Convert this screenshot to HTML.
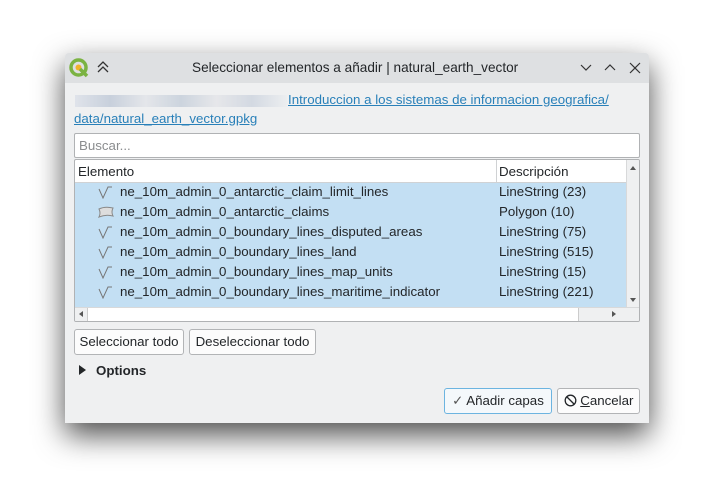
<!DOCTYPE html><html><head><meta charset="utf-8"><style>
body{margin:0;width:714px;height:500px;background:#fff;position:relative;overflow:hidden;font-family:"Liberation Sans","DejaVu Sans",sans-serif;font-size:13.3px;color:#232629}
.win{position:absolute;left:65px;top:53px;width:584px;height:370px;background:#eff0f1;box-shadow:0 12px 30px rgba(0,0,0,.7);border-radius:4px 4px 0 0;overflow:hidden}
.tb{position:absolute;left:0;top:0;width:584px;height:30px;background:#dee0e2;}
.abs{position:absolute;white-space:nowrap}
a{color:#2980b9;text-decoration:underline}
.box{position:absolute;background:#fff;border:1px solid #b0b2b4;border-radius:2px}
.row{position:absolute;left:0;height:20px;line-height:20px;width:551px}
.btn{position:absolute;height:24px;line-height:24px;border:1px solid #b2b4b6;border-radius:3px;background:#fcfcfc;text-align:center}
.ic{position:absolute;left:22px;top:3px}
</style></head><body>
<div class="win">
<div class="tb">
<svg class="abs" style="left:4px;top:5px" width="20" height="20" viewBox="0 0 20 20"><circle cx="9.5" cy="9.5" r="7.5" fill="none" stroke="#7bb342" stroke-width="3.5"/><circle cx="9.5" cy="9.5" r="3" fill="#f0b22a"/><path d="M11 11 L18 18" stroke="#7bb342" stroke-width="3.5"/></svg>
<svg class="abs" style="left:31px;top:7px" width="14" height="14" viewBox="0 0 14 14"><path d="M2 7 L7 2 L12 7 M2 12 L7 7 L12 12" fill="none" stroke="#333" stroke-width="1.3"/></svg>
<div class="abs" style="left:127px;top:7px;font-size:13.6px">Seleccionar elementos a añadir | natural_earth_vector</div>
<svg class="abs" style="left:514px;top:8px" width="66" height="14" viewBox="0 0 66 14"><path d="M2 4 L7 9 L12 4 M26 9 L31 4 L36 9 M51 2 L61 12 M61 2 L51 12" fill="none" stroke="#333" stroke-width="1.2"/></svg>
</div>
<div class="abs" style="left:10px;top:42px;width:212px;height:12px;background:linear-gradient(90deg,#dfe3ea,#c8d0dc,#e4e6ea,#ccd4de,#e6e7ea,#d3d9e2,#eceef0)"></div>
<div class="abs" style="left:223px;top:39px"><a>Introduccion a los sistemas de informacion geografica/</a></div>
<div class="abs" style="left:9px;top:58px"><a>data/natural_earth_vector.gpkg</a></div>
<div class="box" style="left:9px;top:80px;width:564px;height:23px"><span class="abs" style="left:4px;top:4px;color:#8b8d8f">Buscar...</span></div>
<div class="box" style="left:9px;top:106px;width:564px;height:161px;overflow:hidden">
<div class="abs" style="left:0;top:0;width:551px;height:22px;border-bottom:1px solid #d0d2d4"></div>
<div class="abs" style="left:3px;top:4px">Elemento</div>
<div class="abs" style="left:421px;top:0;height:22px;border-left:1px solid #d0d2d4"></div>
<div class="abs" style="left:424px;top:4px">Descripción</div>
<div class="abs" style="left:0;top:23px;width:551px;height:124px;background:#c3dff3"></div>
<div class="row" style="top:22px"><svg class="ic" width="18" height="14"><path d="M2 4 L6 13 L11 2 L15 2" fill="none" stroke="#777"/></svg><span class="abs" style="left:45px">ne_10m_admin_0_antarctic_claim_limit_lines</span><span class="abs" style="left:424px">LineString (23)</span></div>
<div class="row" style="top:42px"><svg class="ic" width="18" height="14"><path d="M2 4 Q8 1 16 3 Q14 7 16 11 Q9 9 2 12 Q4 8 2 4Z" fill="#ddd" stroke="#888"/></svg><span class="abs" style="left:45px">ne_10m_admin_0_antarctic_claims</span><span class="abs" style="left:424px">Polygon (10)</span></div>
<div class="row" style="top:62px"><svg class="ic" width="18" height="14"><path d="M2 4 L6 13 L11 2 L15 2" fill="none" stroke="#777"/></svg><span class="abs" style="left:45px">ne_10m_admin_0_boundary_lines_disputed_areas</span><span class="abs" style="left:424px">LineString (75)</span></div>
<div class="row" style="top:82px"><svg class="ic" width="18" height="14"><path d="M2 4 L6 13 L11 2 L15 2" fill="none" stroke="#777"/></svg><span class="abs" style="left:45px">ne_10m_admin_0_boundary_lines_land</span><span class="abs" style="left:424px">LineString (515)</span></div>
<div class="row" style="top:102px"><svg class="ic" width="18" height="14"><path d="M2 4 L6 13 L11 2 L15 2" fill="none" stroke="#777"/></svg><span class="abs" style="left:45px">ne_10m_admin_0_boundary_lines_map_units</span><span class="abs" style="left:424px">LineString (15)</span></div>
<div class="row" style="top:122px"><svg class="ic" width="18" height="14"><path d="M2 4 L6 13 L11 2 L15 2" fill="none" stroke="#777"/></svg><span class="abs" style="left:45px">ne_10m_admin_0_boundary_lines_maritime_indicator</span><span class="abs" style="left:424px">LineString (221)</span></div>
<div class="abs" style="left:551px;top:0;width:13px;height:147px;background:#eff0f1;border-left:1px solid #d8d9da"></div>
<div class="abs" style="left:555px;top:6px;width:0;height:0;border-left:3px solid transparent;border-right:3px solid transparent;border-bottom:4px solid #555"></div>
<div class="abs" style="left:555px;top:138px;width:0;height:0;border-left:3px solid transparent;border-right:3px solid transparent;border-top:4px solid #555"></div>
<div class="abs" style="left:0;top:147px;width:564px;height:14px;background:#eff0f1;border-top:1px solid #d8d9da"></div>
<div class="abs" style="left:12px;top:148px;width:490px;height:13px;background:#fff;border-left:1px solid #ccc;border-right:1px solid #ccc"></div>
<div class="abs" style="left:4px;top:151px;width:0;height:0;border-top:3px solid transparent;border-bottom:3px solid transparent;border-right:4px solid #555"></div>
<div class="abs" style="left:537px;top:151px;width:0;height:0;border-top:3px solid transparent;border-bottom:3px solid transparent;border-left:4px solid #555"></div>
</div>
<div class="btn" style="left:9px;top:276px;width:108px">Seleccionar todo</div>
<div class="btn" style="left:124px;top:276px;width:125px">Deseleccionar todo</div>
<div class="abs" style="left:14px;top:312px;width:0;height:0;border-top:5px solid transparent;border-bottom:5px solid transparent;border-left:7px solid #232629"></div>
<div class="abs" style="left:31px;top:310px;font-weight:bold">Options</div>
<div class="btn" style="left:379px;top:335px;width:106px;border-color:#6cb4e0;background:#f4f8fb"><span style="color:#555">✓</span> Añadir capas</div>
<div class="btn" style="left:492px;top:335px;width:81px"><svg style="vertical-align:-2px" width="13" height="13" viewBox="0 0 13 13"><circle cx="6.5" cy="6.5" r="5.3" fill="none" stroke="#232629" stroke-width="1.3"/><path d="M3 3 L10 10" stroke="#232629" stroke-width="1.3"/></svg> <u>C</u>ancelar</div>
</div>
</body></html>
